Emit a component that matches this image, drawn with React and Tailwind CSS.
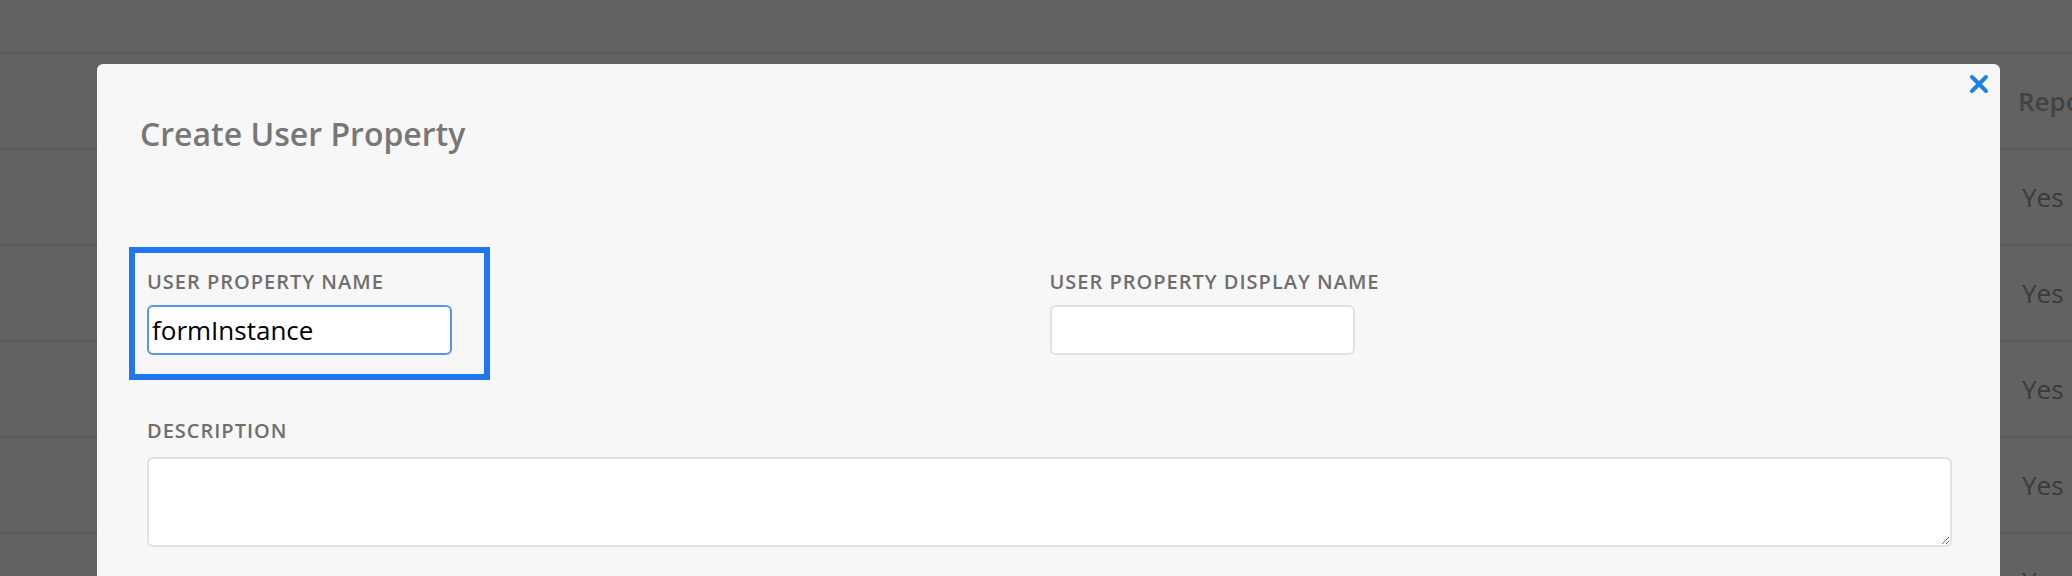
import React from "react";

const rows = ["Yes", "Yes", "Yes", "Yes", "Yes"];

function Field({ label, value, focused }) {
  return (
    <div
      className={`w-[325px] pt-[4px] pb-[7px] ${
        focused
          ? "outline-[6px] outline-solid outline-[#2176f0] outline-offset-[12px]"
          : ""
      }`}
    >
      <label className="block whitespace-nowrap text-[20px] leading-[26px] font-semibold tracking-[0.05em] text-[#6e6e6e] uppercase">
        {label}
      </label>
      <input
        readOnly
        value={value}
        className={`mt-[10px] block w-[305px] h-[50px] rounded-[6px] bg-white px-[3px] text-[26px] text-black outline-none ${
          focused ? "border-2 border-[#5597f0]" : "border-2 border-[#e2e2e2]"
        }`}
      />
    </div>
  );
}

export default function App() {
  return (
    <div
      className="relative h-[576px] w-[2072px] overflow-hidden bg-[#626262]"
      style={{ fontFamily: '"Open Sans", "Noto Sans", sans-serif' }}
    >
      {/* page behind the overlay */}
      <div className="h-[54px] border-b-2 border-[#5a5a5a]" />
      <div className="flex h-[96px] items-center border-b-2 border-[#5a5a5a] pl-[2018px]">
        <span className="whitespace-nowrap text-[26px] font-semibold text-[#434343]">Reporting</span>
      </div>
      {rows.map((r, i) => (
        <div
          key={i}
          className="flex h-[96px] items-center border-b-2 border-[#5a5a5a] pl-[2022px]"
        >
          <span className="text-[26px] text-[#3a3a3a]">{r}</span>
        </div>
      ))}

      {/* modal */}
      <div className="absolute left-[97px] top-[64px] h-[560px] w-[1903px] rounded-[6px] bg-[#f7f7f7] pl-[50px] pr-[48px] pt-[48px]">
        <button className="absolute right-[11px] top-[10px] p-0 text-[#1f80df]">
          <svg width="20" height="20" viewBox="0 0 20 20">
            <path
              d="M3 3 L17 17 M17 3 L3 17"
              stroke="currentColor"
              strokeWidth="4"
              strokeLinecap="round"
              fill="none"
            />
          </svg>
        </button>

        <h2 className="-ml-[7px] text-[32px] leading-[44px] font-semibold text-[#777777]">
          Create User Property
        </h2>

        <div className="mt-[109px] grid grid-cols-2">
          <Field label="User Property Name" value="formInstance" focused />
          <Field label="User Property Display Name" value="" />
        </div>

        <div className="mt-[56px]">
          <label className="block whitespace-nowrap text-[20px] leading-[26px] font-semibold tracking-[0.05em] text-[#6e6e6e] uppercase">
            Description
          </label>
          <textarea
            readOnly
            className="mt-[13px] block h-[90px] w-full resize-y rounded-[6px] border-2 border-[#e2e2e2] bg-white outline-none"
          />
        </div>
      </div>
    </div>
  );
}
